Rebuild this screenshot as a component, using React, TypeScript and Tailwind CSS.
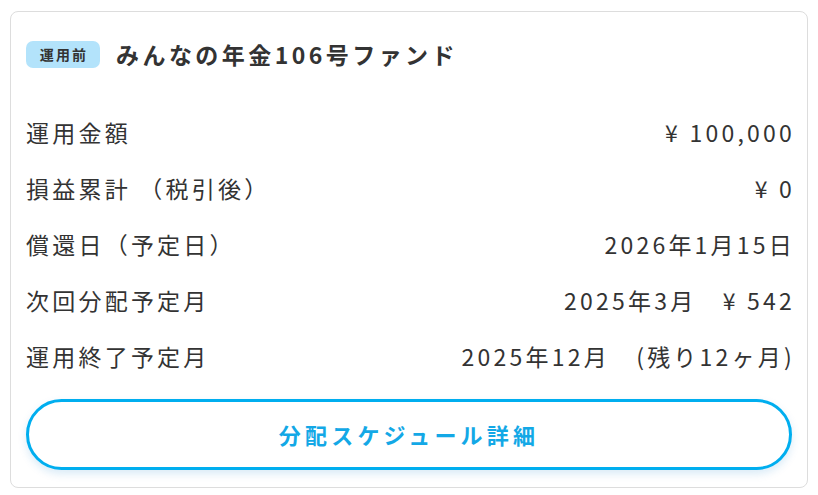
export default function App() {
  const rows: [string, string][] = [
    ["運用金額", "¥ 100,000"],
    ["損益累計 （税引後）", "¥ 0"],
    ["償還日（予定日）", "2026年1月15日"],
    ["次回分配予定月", "2025年3月　¥ 542"],
    ["運用終了予定月", "2025年12月　(残り12ヶ月)"],
  ];
  return (
    <div
      className="w-[818px] h-[495px] bg-white pt-[11px] pl-[10px] pr-[10px]"
      style={{ fontFamily: '"Noto Sans CJK JP", "Noto Sans", sans-serif' }}
    >
      <div className="h-[477px] border border-[#dddddd] rounded-[8px] px-[15px] pt-[29px]">
        <div className="flex items-center gap-[16px] h-[27px]">
          <span className="h-[27px] w-[74px] rounded-[7px] bg-[#b3e3fb] flex items-center justify-center text-[14px] font-bold text-[#333] tracking-[0.15em] pl-[2px]">
            運用前
          </span>
          <span className="text-[23px] font-bold text-[#333] tracking-[0.15em] leading-none">
            みんなの年金106号ファンド
          </span>
        </div>
        <div className="mt-[36px] flex flex-col">
          {rows.map(([l, v]) => (
            <div key={l} className="flex justify-between items-center h-[56px] text-[23px] text-[#333] tracking-[0.14em]">
              <span>{l}</span>
              <span className="mr-[-3px]">{v}</span>
            </div>
          ))}
        </div>
        <button className="mt-[15px] w-full h-[71px] rounded-full border-[3px] border-[#00aeef] bg-white text-[#13a8e6] text-[22px] font-bold tracking-[0.19em] shadow-[0_4px_8px_rgba(0,120,200,0.15)]">
          分配スケジュール詳細
        </button>
      </div>
    </div>
  );
}
